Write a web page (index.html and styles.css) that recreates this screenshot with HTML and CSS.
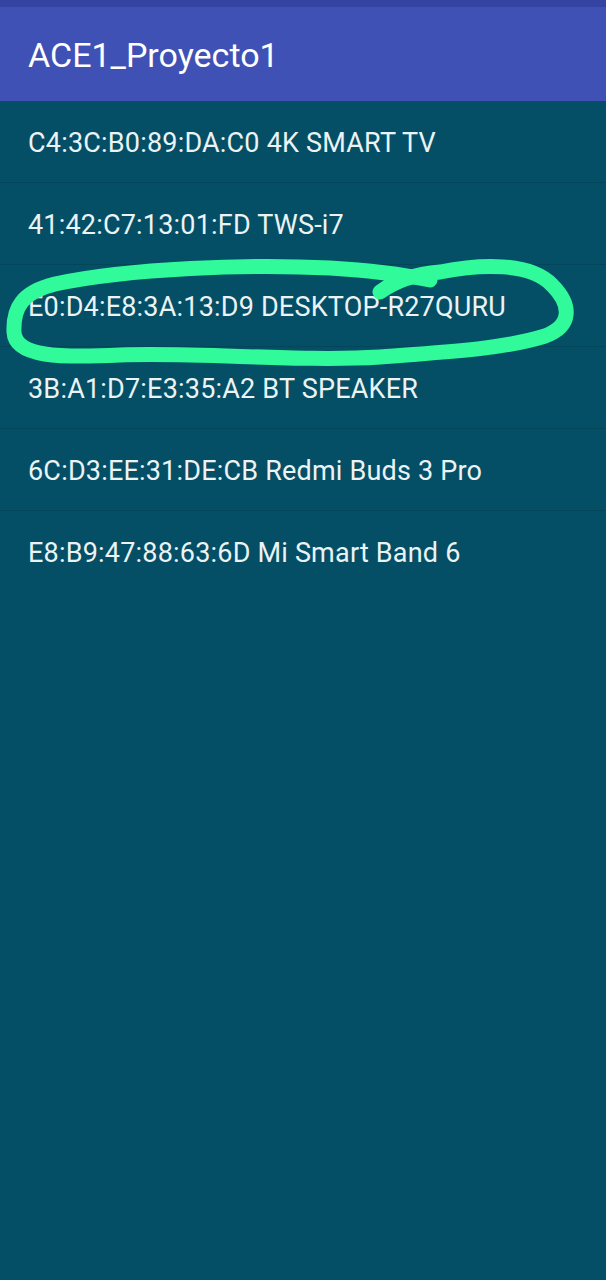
FILE: index.html
```html
<!DOCTYPE html>
<html lang="es">
<head>
<meta charset="utf-8">
<title>ACE1_Proyecto1</title>
<link rel="stylesheet" href="styles.css">
</head>
<body>
<div class="screen">
  <div class="status"></div>
  <header class="appbar"><h1 class="title">ACE1_Proyecto1</h1></header>
  <ul class="list">
    <li class="item">C4:3C:B0:89:DA:C0 4K SMART TV</li>
    <li class="item">41:42:C7:13:01:FD TWS-i7</li>
    <li class="item">E0:D4:E8:3A:13:D9 DESKTOP-R27QURU</li>
    <li class="item">3B:A1:D7:E3:35:A2 BT SPEAKER</li>
    <li class="item">6C:D3:EE:31:DE:CB Redmi Buds 3 Pro</li>
    <li class="item">E8:B9:47:88:63:6D Mi Smart Band 6</li>
  </ul>
  <svg class="scribble" width="606" height="1280" viewBox="0 0 606 1280">
    <path d="M 380 292 C 395 281, 415 274, 440 272 C 480 264, 530 262, 552 285 C 572 305, 572 326, 545 336 C 500 350, 440 352, 380 357 C 300 362, 200 352, 120 355 C 60 358, 15 357, 14 332 C 13 308, 22 292, 55 284 C 130 268, 250 264, 330 268 C 380 271, 410 276, 430 280" fill="none" stroke="#31fa9b" stroke-width="15" stroke-linecap="round" stroke-linejoin="round"/>
  </svg>
</div>
</body>
</html>
```

FILE: styles.css
```css
html, body {
  margin: 0;
  padding: 0;
}
body {
  background: #044f66;
  font-family: Roboto, "Noto Sans", sans-serif;
}
.screen {
  position: relative;
  width: 606px;
  height: 1280px;
  overflow: hidden;
  background: #044f66;
}
.status {
  height: 7px;
  background: #3543a3;
}
.appbar {
  height: 94px;
  background: #3f51b5;
  display: flex;
  align-items: center;
  padding: 0 28px;
}
.title {
  margin: 0;
  color: #ffffff;
  font-size: 34px;
  font-weight: 400;
  padding-top: 2px;
}
.list {
  list-style: none;
  margin: 0;
  padding: 0;
}
.item {
  height: 79px;
  padding: 2px 28px 0;
  border-bottom: 1px solid #034659;
  display: flex;
  align-items: center;
  color: #ecf3f5;
  font-size: 27px;
  letter-spacing: 0.2px;
}
.item:last-child {
  border-bottom: none;
}
.scribble {
  position: absolute;
  left: 0;
  top: 0;
  pointer-events: none;
}
```
